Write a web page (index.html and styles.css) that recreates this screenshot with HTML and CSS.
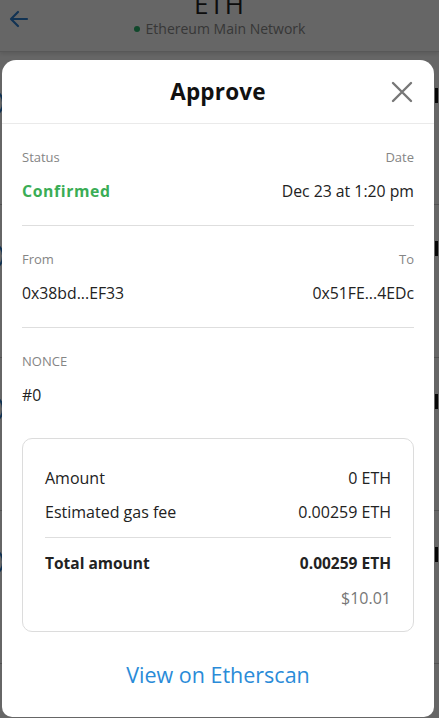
FILE: index.html
```html
<!DOCTYPE html>
<html lang="en">
<head>
<meta charset="utf-8">
<title>Approve</title>
<link rel="stylesheet" href="styles.css">
</head>
<body>
<div class="page">
  <header class="topbar">
    <svg class="back" width="24" height="24" viewBox="0 0 24 24"><path d="M20 12H5M11 5l-7 7 7 7" fill="none" stroke="#2f7fd0" stroke-width="2.2" stroke-linecap="round" stroke-linejoin="round"/></svg>
    <div class="title-wrap">
      <div class="asset">ETH</div>
      <div class="network"><span class="dot"></span>Ethereum Main Network</div>
    </div>
  </header>
  <ul class="txlist">
    <li class="tx"><span class="txicon"></span><span class="txmark"></span></li>
    <li class="tx"><span class="txicon"></span><span class="txmark"></span></li>
    <li class="tx"><span class="txicon"></span><span class="txmark"></span></li>
    <li class="tx"><span class="txicon"></span><span class="txmark"></span></li>
  </ul>
</div>
<div class="overlay"></div>
<div class="modal">
  <div class="modal-head">
    <h1>Approve</h1>
    <svg class="close" width="22" height="22" viewBox="0 0 22 22"><path d="M2 2L20 20M20 2L2 20" stroke="#777" stroke-width="2.4" stroke-linecap="round"/></svg>
  </div>
  <div class="modal-body">
    <section class="detail">
      <div class="row labels"><span>Status</span><span>Date</span></div>
      <div class="row values"><span class="confirmed">Confirmed</span><span>Dec 23 at 1:20 pm</span></div>
    </section>
    <section class="detail">
      <div class="row labels"><span>From</span><span>To</span></div>
      <div class="row values"><span>0x38bd...EF33</span><span>0x51FE...4EDc</span></div>
    </section>
    <section class="detail last">
      <div class="row labels"><span>NONCE</span></div>
      <div class="row values"><span>#0</span></div>
    </section>
    <div class="summary">
      <div class="srow"><span>Amount</span><span>0 ETH</span></div>
      <div class="srow"><span>Estimated gas fee</span><span>0.00259 ETH</span></div>
      <div class="srow total"><span>Total amount</span><span>0.00259 ETH</span></div>
      <div class="srow fiat"><span>$10.01</span></div>
    </div>
    <a class="etherscan" href="#">View on Etherscan</a>
  </div>
</div>
</body>
</html>
```
FILE: styles.css
```css
* { box-sizing: border-box; }
html, body { margin: 0; padding: 0; }
body {
  width: 439px;
  height: 718px;
  overflow: hidden;
  position: relative;
  font-family: "Open Sans", Roboto, sans-serif;
  background: #fff;
  color: #222;
}
.page { width: 439px; }
.topbar {
  height: 52px;
  position: relative;
  display: flex;
  justify-content: center;
  align-items: flex-start;
  border-bottom: 1px solid #ddd;
  box-shadow: 0 2px 4px rgba(0,0,0,0.12);
}
.back { position: absolute; left: 7px; top: 7px; }
.title-wrap { display: flex; flex-direction: column; align-items: center; margin-top: -11px; }
.asset { font-size: 26px; line-height: 30px; color: #222; letter-spacing: 1px; }
.network { font-size: 14px; line-height: 20px; color: #8a8a8a; display: flex; align-items: center; gap: 6px; }
.dot { width: 6px; height: 6px; border-radius: 50%; background: #29b36b; }
.txlist { list-style: none; margin: 0; padding: 0; }
.tx {
  height: 153px;
  display: flex;
  justify-content: space-between;
  align-items: flex-start;
  padding: 36px 1px 0 0;
  border-bottom: 1px solid #ccc;
}
.txicon { width: 30px; height: 30px; border: 2px solid #2f7fd0; border-radius: 50%; margin-left: -26px; }
.txmark { width: 3px; height: 15px; background: #111; }
.overlay { position: absolute; inset: 0; background: rgba(0,0,0,0.6); }
.modal {
  position: absolute;
  top: 60px;
  left: 2px;
  width: 432px;
  height: 657px;
  background: #fff;
  border-radius: 14px 14px 10px 10px;
  display: flex;
  flex-direction: column;
}
.modal-head {
  height: 64px;
  border-bottom: 1px solid #eaeaea;
  display: flex;
  align-items: center;
  justify-content: center;
  position: relative;
}
.modal-head h1 { margin: 0; font-size: 22.5px; font-weight: 700; color: #111; letter-spacing: 0.2px; }
.close { position: absolute; right: 21px; top: 21px; }
.modal-body { padding: 0 20px; display: flex; flex-direction: column; }
.detail {
  padding: 24px 0 23px;
  border-bottom: 1px solid #dedede;
  display: flex;
  flex-direction: column;
  gap: 14px;
}
.detail.last { border-bottom: none; padding-bottom: 32px; }
.row { display: flex; justify-content: space-between; }
.labels { font-size: 13px; line-height: 18px; color: #858585; }
.values { font-size: 15.8px; line-height: 22px; color: #222; }
.confirmed { color: #3aad55; font-weight: 700; letter-spacing: 0.6px; }
.summary {
  border: 1px solid #dcdcdc;
  border-radius: 10px;
  padding: 28px 22px 22px;
  display: flex;
  flex-direction: column;
}
.srow { display: flex; justify-content: space-between; font-size: 16px; line-height: 22px; color: #222; }
.srow + .srow { margin-top: 12px; }
.srow.total { font-weight: 700; font-size: 15.5px; border-top: 1px solid #dedede; padding-top: 14px; margin-top: 14px; }
.srow.fiat { justify-content: flex-end; color: #777; margin-top: 13px; }
.etherscan {
  align-self: center;
  margin-top: 30px;
  font-size: 21.5px;
  line-height: 26px;
  color: #2a8bd8;
  text-decoration: none;
}
```
